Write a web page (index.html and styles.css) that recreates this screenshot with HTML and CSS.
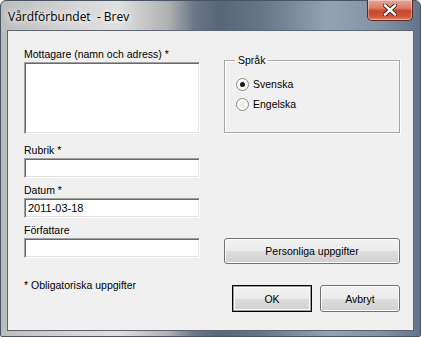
FILE: index.html
```
<!DOCTYPE html>
<html lang="sv">
<head>
    <meta charset="UTF-8">
    <title>Vårdförbundet - Brev</title>
    <link rel="stylesheet" href="styles.css">
</head>
<body>
    <div class="window">
        <div class="titlebar">
            <span class="title">Vårdförbundet &nbsp;- Brev</span>
            <button class="close" aria-label="Stäng">
                <svg width="14" height="12" viewBox="0 0 14 12">
                    <path d="M2 1.5 L12 10.5 M12 1.5 L2 10.5" stroke="#3a1a14" stroke-width="4.2" stroke-linecap="square"/>
                    <path d="M2 1.5 L12 10.5 M12 1.5 L2 10.5" stroke="#fff" stroke-width="2.4" stroke-linecap="square"/>
                </svg>
            </button>
        </div>
        <div class="client">
            <div class="col left">
                <label class="lbl first">Mottagare (namn och adress) *</label>
                <textarea class="field area"></textarea>
                <label class="lbl spaced">Rubrik *</label>
                <input class="field" type="text">
                <label class="lbl">Datum *</label>
                <input class="field" type="text" value="2011-03-18">
                <label class="lbl">Författare</label>
                <input class="field" type="text">
                <p class="note">* Obligatoriska uppgifter</p>
            </div>
            <div class="col right">
                <fieldset class="group">
                    <legend>Språk</legend>
                    <label class="radio"><span class="dot checked"></span>Svenska</label>
                    <label class="radio"><span class="dot"></span>Engelska</label>
                </fieldset>
                <button class="btn wide">Personliga uppgifter</button>
                <div class="actions">
                    <button class="btn default">OK</button>
                    <button class="btn">Avbryt</button>
                </div>
            </div>
        </div>
    </div>
</body>
</html>
```

FILE: styles.css
```
body {
    margin: 0;
    background: #fff;
    font-family: "Liberation Sans", Arial, sans-serif;
    font-size: 10.5px;
}
.window {
    width: 421px;
    height: 337px;
    box-sizing: border-box;
    border: 1px solid #4a5562;
    border-radius: 6px 6px 2px 2px;
    background: linear-gradient(to right, #bcbcbc 0%, #d6d6d6 18%, #e0e0e0 28%, #b0b0b0 40%, #6c7888 46%, #56667b 52%, #64758a 62%, #93a2b3 78%, #8393a7 90%, #63758c 100%);
    display: flex;
    flex-direction: column;
}
.titlebar {
    height: 29px;
    display: flex;
    align-items: flex-start;
}
.title {
    font-family: "Open Sans", "Noto Sans", sans-serif;
    font-size: 12px;
    line-height: 16px;
    margin: 8px 0 0 7px;
    color: #000;
    text-shadow: 0 0 6px #fff, 0 0 8px #fff;
    white-space: pre;
}
.close {
    margin: -1px 7px 0 auto;
    width: 46px;
    height: 21px;
    padding: 0;
    border: 1px solid #5a2a22;
    border-top: none;
    border-radius: 0 0 5px 5px;
    background: linear-gradient(#e9a799 0%, #dc7c66 40%, #c6452b 55%, #cf5a3e 85%, #e08a6c 100%);
    box-shadow: inset 0 0 0 1px rgba(255, 255, 255, 0.35);
    display: flex;
    align-items: center;
    justify-content: center;
}
.client {
    flex: 1;
    margin: 0 6px 5px 6px;
    border: 1px solid #5b6470;
    background: #f0f0f0;
    display: flex;
    gap: 24px;
    padding: 15px 0 0 16px;
}
.col {
    width: 176px;
    display: flex;
    flex-direction: column;
}
.lbl {
    display: block;
    line-height: 16px;
    margin-top: 4px;
    color: #000;
}
.lbl.first {
    margin-top: 0;
}
.lbl.spaced {
    margin-top: 8px;
}
.field {
    box-sizing: border-box;
    width: 176px;
    height: 20px;
    margin: 0;
    padding: 1px 3px;
    font: inherit;
    font-size: 11px;
    color: #000;
    background: #fff;
    border-style: solid;
    border-width: 1px;
    border-color: #a0a0a0 #ffffff #ffffff #a0a0a0;
    box-shadow: inset 1px 1px 0 #696969, inset -1px -1px 0 #e3e3e3;
    outline: none;
    resize: none;
}
.field.area {
    height: 72px;
}
.note {
    margin: 19px 0 0;
    line-height: 16px;
}
.group {
    margin: 6px 0 0;
    padding: 6px 0 18px 10px;
    border: 1px solid #a8a8a8;
    box-shadow: inset 1px 1px 0 #fff, 1px 1px 0 #fff;
    height: 81px;
    box-sizing: border-box;
    min-width: 0;
}
.group legend {
    padding: 0 3px;
    line-height: 16px;
}
.radio {
    display: flex;
    align-items: center;
    height: 20px;
    gap: 4px;
    margin-left: 1px;
}
.dot {
    width: 11px;
    height: 11px;
    border-radius: 50%;
    border: 1px solid #8a8a8a;
    background: radial-gradient(circle at 50% 50%, #e6e6e6 0%, #f6f6f6 50%, #fff 100%);
    box-sizing: content-box;
    display: flex;
    align-items: center;
    justify-content: center;
}
.dot.checked::after {
    content: "";
    width: 5px;
    height: 5px;
    border-radius: 50%;
    background: #1a1a1a;
}
.btn {
    box-sizing: border-box;
    height: 26px;
    padding: 0;
    font: inherit;
    color: #000;
    border: 1px solid #707070;
    border-radius: 3px;
    background: linear-gradient(#f2f2f2 0%, #ebebeb 50%, #dddddd 51%, #cfcfcf 100%);
    box-shadow: inset 0 0 0 1px #fcfcfc;
}
.btn.wide {
    width: 176px;
    margin-top: 105px;
}
.actions {
    display: flex;
    justify-content: flex-end;
    gap: 8px;
    margin-top: 21px;
}
.actions .btn {
    width: 80px;
    height: 27px;
}
.btn.default {
    border: 1px solid #000;
    border-radius: 0;
    box-shadow: inset 0 0 0 1px #9a9a9a, inset 0 0 0 2px #fcfcfc;
}
```
